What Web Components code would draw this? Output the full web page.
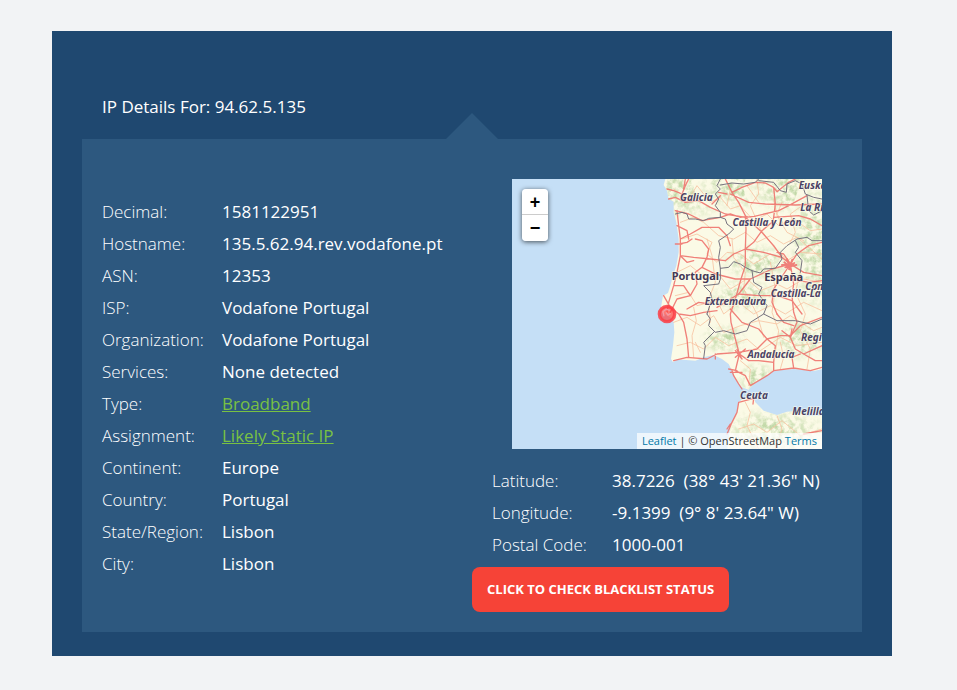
<!DOCTYPE html>
<html lang="en">
<head>
<meta charset="utf-8">
<meta name="viewport" content="width=device-width, initial-scale=1">
<title>IP Details For: 94.62.5.135</title>
<style>
  body { margin: 0; background: #f2f3f5; font-family: "Open Sans", "Noto Sans", sans-serif; font-size: 17px; line-height: 32px; color: #fff; }
</style>
</head>
<body>
<ip-report>
  <span slot="title">IP Details For: 94.62.5.135</span>
  <ip-row><span slot="label">Decimal:</span>1581122951</ip-row>
  <ip-row><span slot="label">Hostname:</span>135.5.62.94.rev.vodafone.pt</ip-row>
  <ip-row><span slot="label">ASN:</span>12353</ip-row>
  <ip-row><span slot="label">ISP:</span>Vodafone Portugal</ip-row>
  <ip-row><span slot="label">Organization:</span>Vodafone Portugal</ip-row>
  <ip-row><span slot="label">Services:</span>None detected</ip-row>
  <ip-row><span slot="label">Type:</span><a href="#broadband">Broadband</a></ip-row>
  <ip-row><span slot="label">Assignment:</span><a href="#static">Likely Static IP</a></ip-row>
  <ip-row><span slot="label">Continent:</span>Europe</ip-row>
  <ip-row><span slot="label">Country:</span>Portugal</ip-row>
  <ip-row><span slot="label">State/Region:</span>Lisbon</ip-row>
  <ip-row><span slot="label">City:</span>Lisbon</ip-row>
  <ip-map slot="map"></ip-map>
  <ip-row slot="location"><span slot="label">Latitude:</span>38.7226&nbsp; (38° 43' 21.36" N)</ip-row>
  <ip-row slot="location"><span slot="label">Longitude:</span>-9.1399&nbsp; (9° 8' 23.64" W)</ip-row>
  <ip-row slot="location"><span slot="label">Postal Code:</span>1000-001</ip-row>
  <ip-button slot="action">CLICK TO CHECK BLACKLIST STATUS</ip-button>
</ip-report>

<template id="report-template">
  <style>
    :host { display: block; padding: 31px 65px 34px 52px; }
    .card { background: #1f4870; padding: 60px 30px 24px; }
    h1 { margin: 0; padding: 0 20px 16px; font: inherit; font-weight: 500; }
    .panel { position: relative; display: grid; grid-template-columns: 1fr 1fr; background: #2d587f; padding-bottom: 20px; }
    .panel::before { content: ""; position: absolute; bottom: 100%; left: 50%; margin-left: -26px; border: 26px solid transparent; border-top: 0; border-bottom-color: #2d587f; }
    .details { padding-top: 57px; }
    .map { padding: 40px 40px 16px; }
    .action { padding-top: 6px; }
    @media (max-width: 760px) { :host { padding: 16px; } .panel { grid-template-columns: 1fr; } }
  </style>
  <main class="card">
    <h1><slot name="title"></slot></h1>
    <section class="panel">
      <div class="details"><slot></slot></div>
      <div>
        <div class="map"><slot name="map"></slot></div>
        <slot name="location"></slot>
        <div class="action"><slot name="action"></slot></div>
      </div>
    </section>
  </main>
</template>

<template id="row-template">
  <style>
    :host { display: block; }
    dl { margin: 0; padding-left: 20px; display: grid; grid-template-columns: 120px 1fr; }
    dt { font-weight: 300; }
    dd { margin: 0; font-weight: 500; }
    ::slotted(a) { color: #79c143; font-weight: 400; text-decoration: underline; }
  </style>
  <dl><dt><slot name="label"></slot></dt><dd><slot></slot></dd></dl>
</template>

<template id="button-template">
  <style>
    :host { display: block; }
    button { display: block; height: 45px; padding: 0 15px 2px; border: 0; border-radius: 8px; background: #f64337; color: #fff; font: 700 13px/20px "Open Sans", sans-serif; cursor: pointer; }
  </style>
  <button type="button"><slot></slot></button>
</template>

<template id="map-template">
  <style>
    :host { display: block; position: relative; height: 270px; overflow: hidden; background: #c5dff6; line-height: 16px; }
    svg { position: absolute; right: 0; top: 0; width: 310px; height: 270px; }
    .zoom { position: absolute; left: 10px; top: 10px; width: 26px; border-radius: 4px; box-shadow: 0 1px 5px rgba(0,0,0,.65); overflow: hidden; }
    button { display: block; width: 26px; height: 26px; padding: 0; border: 0; background: #fff; color: #000; font: 700 18px/26px "Liberation Sans", sans-serif; }
    button:first-child { height: 25px; }
    button + button { height: 27px; border-top: 1px solid #ccc; }
    .credit { position: absolute; right: 0; bottom: 0; padding: 0 5px; background: rgba(255,255,255,.7); color: #333; font-size: 11px; white-space: nowrap; }
    a { color: #0078a8; text-decoration: none; }
    text { font: italic 700 30px "Noto Sans", sans-serif; fill: #4b4264; stroke: #fffff0; stroke-width: 5px; stroke-opacity: .6; paint-order: stroke; text-anchor: middle; }
    text.country { font-style: normal; font-size: 33px; fill: #443855; }
  </style>
  <svg viewBox="0 0 930 810" role="img" aria-label="Map of Portugal and western Spain">
    <defs>
      <clipPath id="land">
        <path d="M-5 0-10 18 0 35 5 60 20 68 20 100 28 130 35 180 35 220 28 260 18 290 10 320 3 342-12 350-18 385-15 402 10 415 20 430 22 460 18 500 12 540 18 550 30 541 85 545 110 535 140 528 165 540 185 555 195 575 205 600 225 625 245 632 255 620 280 600 310 583 320 575 380 570 440 576 470 570V-5ZM180 815 190 740 210 700 215 670 230 658 260 655 265 670 290 695 330 708 360 698 400 695 420 712 470 708V815Z"/>
      </clipPath>
      <filter id="relief" x="0" y="0" width="100%" height="100%" color-interpolation-filters="sRGB">
        <feTurbulence type="fractalNoise" baseFrequency=".06" numOctaves="4" seed="8"/>
        <feColorMatrix values="0 0 0 0 .76  0 0 0 0 .85  0 0 0 0 .66  0 3 0 0 -1.15"/>
      </filter>
      <radialGradient id="fade"><stop offset=".3" stop-color="#fff"/><stop offset="1" stop-color="#000"/></radialGradient>
      <mask id="hills">
        <g fill="url(#fade)">
          <ellipse cx="60" cy="35" rx="150" ry="95"/><ellipse cx="210" cy="20" rx="130" ry="80"/>
          <ellipse cx="380" cy="25" rx="150" ry="90"/><ellipse cx="440" cy="200" rx="75" ry="210"/>
          <ellipse cx="270" cy="250" rx="110" ry="60"/><ellipse cx="230" cy="350" rx="110" ry="55"/>
          <ellipse cx="170" cy="480" rx="75" ry="50"/><ellipse cx="270" cy="600" rx="65" ry="55"/>
          <ellipse cx="320" cy="760" rx="170" ry="80"/><ellipse cx="400" cy="480" rx="90" ry="70"/>
        </g>
      </mask>
    </defs>
    <g transform="translate(465 0)">
      <g clip-path="url(#land)">
        <path fill="#fbfae6" d="M-30-10H480V820H-30Z"/>
        <g mask="url(#hills)"><rect x="-20" y="-10" width="490" height="825" filter="url(#relief)"/></g>
      </g>
      <g fill="none" stroke-linejoin="round" stroke-linecap="round">
        <g stroke="#f8c2a0" stroke-width="3" opacity=".8">
          <path d="M20 30 65 60 90 20 130 70 160 55 190 90 220 80 260 125 300 105 335 140 380 120 430 155 465 150M40 130 80 115 110 130 155 170 200 180 235 160 270 190 310 170 350 195 390 175 465 240M45 180 90 165 135 190 120 225 150 250 180 220 220 225 260 255 310 225 360 245 400 220 465 225M30 280 70 260 120 300 150 280 190 330 240 300 280 335 330 315 360 330 410 300 465 310M25 350 65 340 90 380 150 365 170 405 215 370 260 405 310 380 355 405 410 370 465 395M20 430 60 415 100 440 140 410 170 460 220 440 275 425 330 435 370 410 440 455 465 445M30 500 70 490 110 510 145 475 185 500 240 480 280 515 340 475 390 500 465 490M80 385 88 425 75 470 80 535M120 180 135 230 145 310 125 360 130 430M270 0 275 45 250 80 280 150 325 210 370 250M320 60 330 110 360 160 410 185M195 180 200 235 235 280 230 330 270 405 290 475M310 250 325 330 315 400 335 455 325 520M400 280 385 340 415 405 400 455 430 510 420 570M215 750 260 735 300 760 345 725 400 770 465 750M235 670 250 700 240 740 275 810M330 710 345 750 325 810M190 30 180 80M240 20 275 70M345 70 330 105 350 135M405 80 370 105 385 160 370 190M100 520 85 490M220 545 250 570 245 620M340 570 350 535 340 490"/>
        </g>
        <g stroke="#ef746e" stroke-width="4" opacity=".9">
          <path d="M5 60 25 55 55 70 45 45 55 20 65 0M45 45 20 35 0 30M55 70 95 65 130 85 175 105 235 115 262 112 335 95 365 80 420 50M25 95 65 105 105 125 160 115 190 105 220 115 240 112M175 0 195 40 215 70 235 110 237 150 235 210 235 260 222 300 208 350 190 405 192 430 205 480 217 525 205 575M195 40 225 25 265 10 295 12 320 25 330 38 365 10 385 0M190 45 245 70 295 75 385 78 465 75M320 25 325 75 320 115 315 145M465 140 430 120 395 110 320 115M235 115 280 155 320 200 345 235 370 255M235 210 260 190 285 155 315 130M175 245 200 225 235 210 290 220 345 235"/>
          <path d="M30 95 35 140 40 180 40 230 30 280 20 320 5 370 0 400M40 180 70 165 105 145 155 145 180 170 190 200M40 230 80 235 130 240 175 245M40 230 60 250 80 245M35 195 60 190 75 180M30 140 60 155 65 180M25 195 45 195M20 320 50 320 70 350 90 315 85 280 105 265 120 235 125 210 105 185 85 180M70 350 30 360 10 400M105 265 145 285 205 300 250 300M-10 350 10 385 35 405 70 410 110 400 150 395M35 405 50 430 60 480 65 535M60 390 95 370 130 375 155 355M370 255 315 270 250 300 215 345 150 385M370 255 340 300 320 330 315 370 330 405M370 255 390 225 425 200 465 190M370 255 350 225 330 220M370 255 410 280 465 290M370 255 380 315 375 350 380 400 390 430 370 475"/>
          <path d="M20 545 60 535 120 540 150 525 215 520 270 510 300 480 340 470 370 470 400 440 465 415M300 480 275 450 225 430 190 390M217 525 245 545 275 545 320 550 320 575M205 575 235 590 250 620 300 590 320 575 380 567 430 575 465 565M195 575 200 590 215 615 225 630M190 580 225 580M185 570 210 575M205 515 225 540M205 535 235 510M210 512 222 535M370 475 345 455M370 475 375 450M370 475 385 510 410 525 465 500M320 550 325 500 300 480M380 567 375 535 400 525M410 525 445 545 465 545M180 765 195 730 210 700 215 670 260 658 258 675M190 735 180 750M145 525 145 540M410 765 465 755"/>
          <path d="M465 305 425 310 370 300M405 405 375 365 330 350 275 350 215 345M330 405 350 430 380 440M55 0 50 30M160 50 135 75M155 40 180 45"/>
          <path stroke-width="6" d="M352 250 365 262 382 252M360 240 370 272M376 242 366 270M355 265 388 258M345 258 372 256"/>
        </g>
        <g stroke="#77737f" stroke-width="3">
          <path d="M25 105 45 100 60 105 65 120 85 120 110 125 125 118 160 115 175 120 180 135 200 150 185 165 155 185 160 205 155 235 160 268 185 265 200 248 220 255 235 265 255 275 280 282 290 270 325 268 345 240 340 220 360 200 390 180 420 175 435 185 465 185M160 0 150 20 160 30 145 45 155 60 145 80 160 100 160 115M160 18 195 12 230 15 265 10 275 0M275 5 320 10 340 35 358 40 360 15 385 5 405 15 415 45 440 55 465 60M420 50 425 95 440 108 465 95M385 185 395 205 385 220 405 245 400 280M255 275 260 310 285 325 275 345 300 380 290 405 250 430 240 455 205 465 170 455 145 460 125 440 130 420 120 405M160 268 160 300 155 315 110 320 130 340 135 360 120 405M110 538 115 500 110 490 140 460M290 405 330 425 385 425 430 435 465 420"/>
        </g>
      </g>
      <g>
        <text x="88" y="66">Galicia</text>
        <text x="300" y="141">Castilla y León</text>
        <text x="395" y="31" style="text-anchor:start">Euska</text>
        <text x="400" y="96" style="text-anchor:start">La Rio</text>
        <text class="country" x="85" y="302">Portugal</text>
        <text class="country" x="350" y="305">España</text>
        <text x="415" y="332" style="text-anchor:start">Com</text>
        <text x="311" y="355" style="text-anchor:start">Castilla-La</text>
        <text x="205" y="377">Extremadura</text>
        <text x="402" y="487" style="text-anchor:start">Regió</text>
        <text x="312" y="537">Andalucía</text>
        <text x="261" y="660">Ceuta</text>
        <text x="376" y="709" style="text-anchor:start">Melilla</text>
      </g>
      <circle cx="0" cy="405" r="23" fill="#f33" fill-opacity=".65" stroke="#fa3e45" stroke-width="10" stroke-opacity=".85"/>
      <path d="M-9 412-12 398-3 391 9 394M-3 400 3 408 11 403" fill="none" stroke="#f39aa4" stroke-width="4"/>
    </g>
  </svg>
  <div class="zoom"><button type="button" aria-label="Zoom in">+</button><button type="button" aria-label="Zoom out">−</button></div>
  <div class="credit"><a href="#leaflet">Leaflet</a> | © OpenStreetMap <a href="#terms">Terms</a></div>
</template>

<script>
  class TemplateElement extends HTMLElement {
    constructor() {
      super();
      const template = document.getElementById(this.constructor.template);
      this.attachShadow({ mode: "open" }).append(template.content.cloneNode(true));
    }
  }
  class IpRow extends TemplateElement { static template = "row-template"; }
  class IpButton extends TemplateElement { static template = "button-template"; }
  class IpMap extends TemplateElement { static template = "map-template"; }
  class IpReport extends TemplateElement { static template = "report-template"; }
  customElements.define("ip-row", IpRow);
  customElements.define("ip-button", IpButton);
  customElements.define("ip-map", IpMap);
  customElements.define("ip-report", IpReport);
</script>
</body>
</html>
